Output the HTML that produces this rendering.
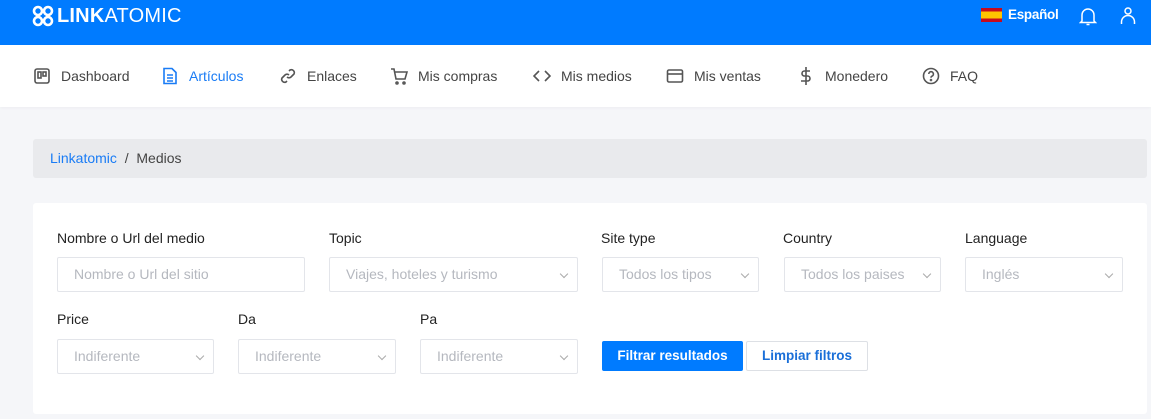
<!DOCTYPE html>
<html><head><meta charset="utf-8"><style>
*{box-sizing:border-box;margin:0;padding:0}
body{width:1151px;height:419px;overflow:hidden;background:#f5f6f9;font-family:"Liberation Sans",sans-serif;position:relative}
.top{position:absolute;left:0;top:0;width:1151px;height:45px;background:#007bff}
.nav{position:absolute;left:0;top:45px;width:1151px;height:62px;background:#fff;box-shadow:0 1px 3px rgba(0,0,0,.04)}
.ni{position:absolute;top:22px;font-size:14px;color:#444;display:flex;align-items:center;gap:10px}
.ni svg{width:18px;height:18px}
.bc{position:absolute;left:33px;top:139px;width:1114px;height:39px;background:#e9eaed;border-radius:3px;font-size:14px;color:#444;padding:11px 0 0 17px}
.card{position:absolute;left:33px;top:203px;width:1114px;height:211px;background:#fff;border-radius:3px}
.lb{position:absolute;font-size:14px;color:#222}
.in{position:absolute;height:35px;border:1px solid #e3e5ea;border-radius:2px;font-size:14px;color:#b5b8bf;padding:8px 0 0 16px}
.in.s:after{content:"";position:absolute;right:10px;top:13px;width:5px;height:5px;border-right:1px solid #aaa;border-bottom:1px solid #aaa;transform:rotate(45deg)}
.btn{position:absolute;top:138px;height:30px;font-size:13.5px;font-weight:bold;border-radius:2px;text-align:center;padding-top:7px}
</style></head><body>
<div class="top">
<svg style="position:absolute;left:32px;top:5px" width="22" height="22" viewBox="0 0 22 22" fill="none" stroke="#fff" stroke-width="2.6"><rect x="2" y="2" width="8" height="8" rx="4"/><rect x="12" y="2" width="8" height="8" rx="4"/><rect x="2" y="12" width="8" height="8" rx="4"/><rect x="12" y="12" width="8" height="8" rx="4"/></svg>
<div style="position:absolute;left:57px;top:5px;color:#fff;font-size:20px;letter-spacing:0.2px"><b>LINK</b>ATOMIC</div>
<div style="position:absolute;left:981px;top:8px;width:21px;height:14px;background:linear-gradient(#c60b1e 0 25%,#ffc400 25% 75%,#c60b1e 75%)"></div>
<div style="position:absolute;left:1008px;top:7px;color:#fff;font-size:13.5px;font-weight:bold;letter-spacing:-0.3px">Español</div>
<svg style="position:absolute;left:1079px;top:6px" width="18" height="20" viewBox="0 0 18 20" fill="none" stroke="#fff" stroke-width="1.5"><path d="M3 15V9a6 6 0 0 1 12 0v6l1.5 1.5h-15z"/><path d="M7.5 18.5h3"/></svg>
<svg style="position:absolute;left:1119px;top:6px" width="18" height="20" viewBox="0 0 18 20" fill="none" stroke="#fff" stroke-width="1.5"><circle cx="9" cy="5" r="3"/><path d="M2.5 18v-2a6.5 6.5 0 0 1 13 0v2"/></svg>
</div>
<div class="nav">
<div class="ni" style="left:33px"><svg viewBox="0 0 18 18" fill="none" stroke="#555" stroke-width="1.6"><rect x="2" y="2" width="14" height="14" rx="2"/><rect x="5" y="5" width="3" height="6"/><rect x="10" y="5" width="3" height="4"/></svg>Dashboard</div>
<div class="ni" style="left:161px;color:#1a7cf5"><svg viewBox="0 0 18 18" fill="none" stroke="#1a7cf5" stroke-width="1.6"><path d="M3 1.5h8l4 4V16.5H3z"/><path d="M6 8h6M6 11h6M6 14h6"/></svg>Artículos</div>
<div class="ni" style="left:279px"><svg viewBox="0 0 18 18" fill="none" stroke="#555" stroke-width="1.6"><path d="M8 10a3 3 0 0 0 4 0l3-3a3 3 0 0 0-4-4l-1 1"/><path d="M10 8a3 3 0 0 0-4 0l-3 3a3 3 0 0 0 4 4l1-1"/></svg>Enlaces</div>
<div class="ni" style="left:390px"><svg viewBox="0 0 18 18" fill="none" stroke="#555" stroke-width="1.6"><path d="M1 2h3l2 10h9l2-7H5"/><circle cx="7" cy="16" r="1"/><circle cx="14" cy="16" r="1"/></svg>Mis compras</div>
<div class="ni" style="left:533px"><svg viewBox="0 0 18 18" fill="none" stroke="#555" stroke-width="1.6"><path d="M6 4L1 9l5 5M12 4l5 5-5 5"/></svg>Mis medios</div>
<div class="ni" style="left:666px"><svg viewBox="0 0 18 18" fill="none" stroke="#555" stroke-width="1.6"><rect x="1.5" y="3" width="15" height="12" rx="1.5"/><path d="M1.5 7h15"/></svg>Mis ventas</div>
<div class="ni" style="left:797px"><svg viewBox="0 0 18 18" fill="none" stroke="#555" stroke-width="1.6"><path d="M9 0v18M13 4H7.5a2.5 2.5 0 0 0 0 5h3a2.5 2.5 0 0 1 0 5H4"/></svg>Monedero</div>
<div class="ni" style="left:922px"><svg viewBox="0 0 18 18" fill="none" stroke="#555" stroke-width="1.6"><circle cx="9" cy="9" r="7.5"/><path d="M6.8 7a2.3 2.3 0 1 1 3 2.2c-.6.3-.8.8-.8 1.5"/><circle cx="9" cy="13" r=".5"/></svg>FAQ</div>
</div>
<div class="bc"><span style="color:#1a7cf5">Linkatomic</span>&nbsp;&nbsp;/&nbsp;&nbsp;Medios</div>
<div class="card">
<div class="lb" style="left:24px;top:27px">Nombre o Url del medio</div>
<div class="lb" style="left:296px;top:27px">Topic</div>
<div class="lb" style="left:568px;top:27px">Site type</div>
<div class="lb" style="left:750px;top:27px">Country</div>
<div class="lb" style="left:932px;top:27px">Language</div>
<div class="in" style="left:24px;top:54px;width:248px">Nombre o Url del sitio</div>
<div class="in s" style="left:296px;top:54px;width:249px">Viajes, hoteles y turismo</div>
<div class="in s" style="left:569px;top:54px;width:157px">Todos los tipos</div>
<div class="in s" style="left:751px;top:54px;width:157px">Todos los paises</div>
<div class="in s" style="left:932px;top:54px;width:158px">Inglés</div>
<div class="lb" style="left:24px;top:108px">Price</div>
<div class="lb" style="left:205px;top:108px">Da</div>
<div class="lb" style="left:387px;top:108px">Pa</div>
<div class="in s" style="left:24px;top:136px;width:157px">Indiferente</div>
<div class="in s" style="left:205px;top:136px;width:158px">Indiferente</div>
<div class="in s" style="left:387px;top:136px;width:158px">Indiferente</div>
<div class="btn" style="left:569px;width:141px;background:#007bff;color:#fff">Filtrar resultados</div>
<div class="btn" style="left:713px;width:122px;border:1px solid #dde0e5;color:#1a6fd8;padding-top:6px">Limpiar filtros</div>
</div>
</body></html>
